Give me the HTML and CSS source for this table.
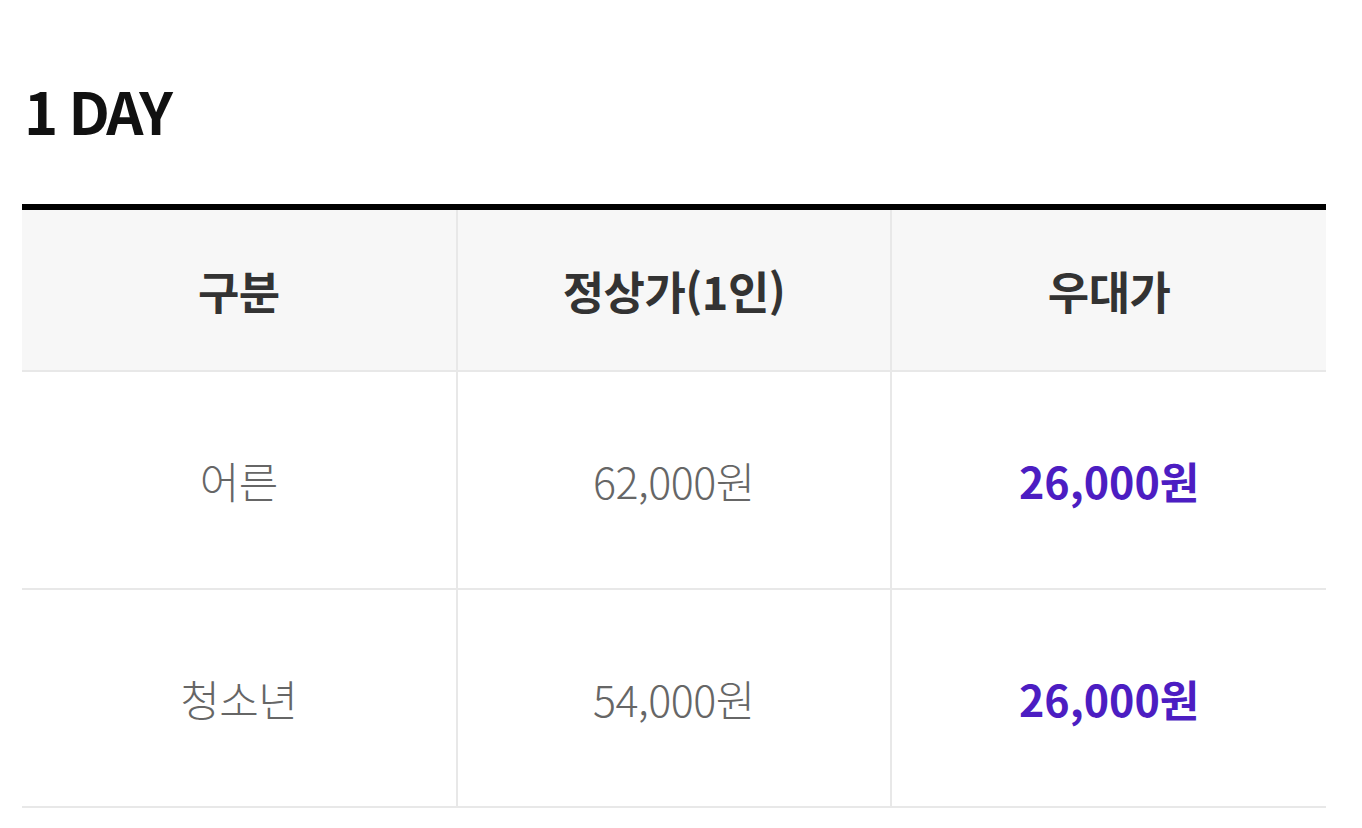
FILE: index.html
```html
<!DOCTYPE html>
<html lang="ko">
<head>
<meta charset="utf-8">
<link rel="stylesheet" href="styles.css">
</head>
<body>
<section class="price">
  <h2 class="title">1 DAY</h2>
  <table class="table">
    <thead>
      <tr><th>구분</th><th>정상가(1인)</th><th>우대가</th></tr>
    </thead>
    <tbody>
      <tr><td>어른</td><td>62,000원</td><td class="sale">26,000원</td></tr>
      <tr><td>청소년</td><td>54,000원</td><td class="sale">26,000원</td></tr>
    </tbody>
  </table>
</section>
</body>
</html>
```
FILE: styles.css
```css
html, body {
  margin: 0;
  padding: 0;
  background: #fff;
}
body {
  font-family: "Noto Sans CJK KR", "Noto Sans", sans-serif;
  color: #222;
}
.price {
  padding: 70px 36px 0 22px;
}
.title {
  margin: 0 0 0 2px;
  font-size: 58px;
  line-height: 80px;
  font-weight: 700;
  letter-spacing: -3px;
  color: #111;
}
.table {
  margin-top: 54px;
  width: 100%;
  border-collapse: collapse;
  table-layout: fixed;
  border-top: 6px solid #000;
}
.table th,
.table td {
  padding: 0;
  text-align: center;
  border-left: 2px solid #e8e8e8;
  border-bottom: 2px solid #e8e8e8;
}
.table th:first-child,
.table td:first-child {
  border-left: none;
}
.table th {
  height: 160px;
  background: #f7f7f7;
  font-size: 45px;
  font-weight: 700;
  color: #333;
  letter-spacing: -0.5px;
}
.table td {
  height: 216px;
  font-size: 43px;
  font-weight: 300;
  color: #666;
  letter-spacing: -0.5px;
}
.table td.sale {
  color: #4c1dc2;
  font-weight: 700;
  letter-spacing: 0;
}
```
